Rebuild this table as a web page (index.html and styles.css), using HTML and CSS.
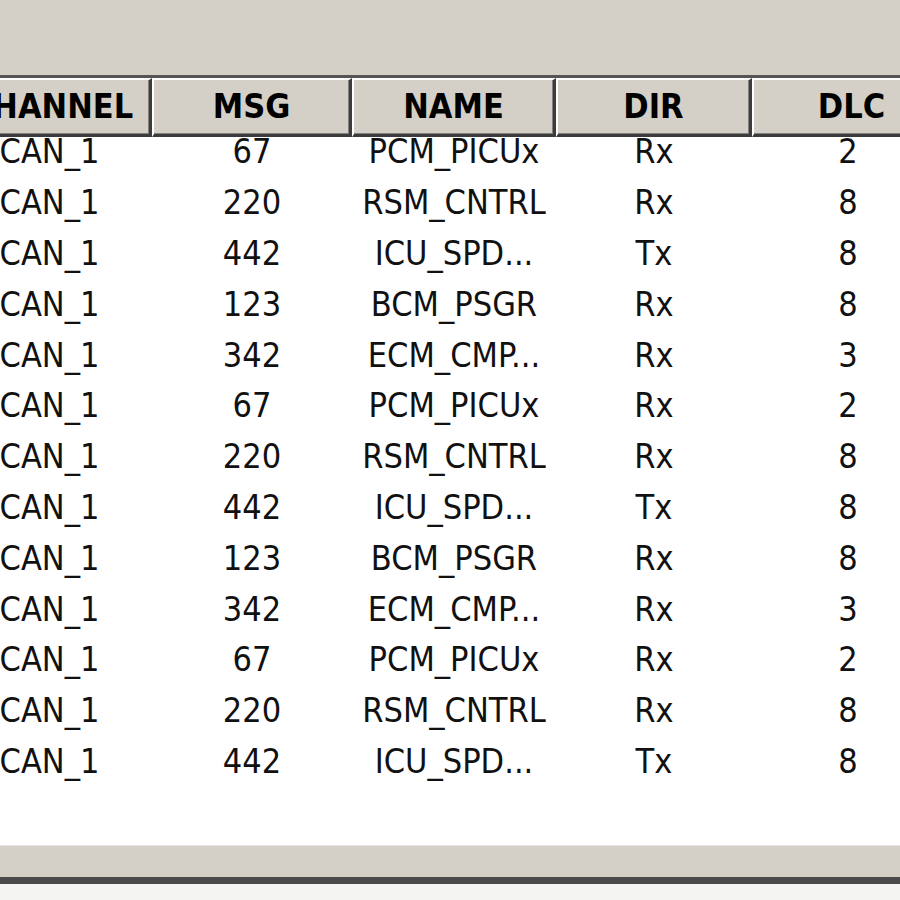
FILE: index.html
```html
<!DOCTYPE html>
<html>
<head>
<meta charset="utf-8">
<link rel="stylesheet" href="styles.css">
</head>
<body>
<div class="window">
  <div class="top"></div>
  <div class="list">
    <div class="header cols">
      <div class="hcell">CHANNEL</div>
      <div class="hcell">MSG</div>
      <div class="hcell">NAME</div>
      <div class="hcell">DIR</div>
      <div class="hcell">DLC</div>
    </div>
    <div class="body">
      <div class="rows">
        <div class="row cols"><span>CAN_1</span><span>67</span><span>PCM_PICUx</span><span>Rx</span><span>2</span></div>
        <div class="row cols"><span>CAN_1</span><span>220</span><span>RSM_CNTRL</span><span>Rx</span><span>8</span></div>
        <div class="row cols"><span>CAN_1</span><span>442</span><span>ICU_SPD...</span><span>Tx</span><span>8</span></div>
        <div class="row cols"><span>CAN_1</span><span>123</span><span>BCM_PSGR</span><span>Rx</span><span>8</span></div>
        <div class="row cols"><span>CAN_1</span><span>342</span><span>ECM_CMP...</span><span>Rx</span><span>3</span></div>
        <div class="row cols"><span>CAN_1</span><span>67</span><span>PCM_PICUx</span><span>Rx</span><span>2</span></div>
        <div class="row cols"><span>CAN_1</span><span>220</span><span>RSM_CNTRL</span><span>Rx</span><span>8</span></div>
        <div class="row cols"><span>CAN_1</span><span>442</span><span>ICU_SPD...</span><span>Tx</span><span>8</span></div>
        <div class="row cols"><span>CAN_1</span><span>123</span><span>BCM_PSGR</span><span>Rx</span><span>8</span></div>
        <div class="row cols"><span>CAN_1</span><span>342</span><span>ECM_CMP...</span><span>Rx</span><span>3</span></div>
        <div class="row cols"><span>CAN_1</span><span>67</span><span>PCM_PICUx</span><span>Rx</span><span>2</span></div>
        <div class="row cols"><span>CAN_1</span><span>220</span><span>RSM_CNTRL</span><span>Rx</span><span>8</span></div>
        <div class="row cols"><span>CAN_1</span><span>442</span><span>ICU_SPD...</span><span>Tx</span><span>8</span></div>
      </div>
    </div>
    <div class="bottom"></div>
  </div>
</div>
</body>
</html>
```
FILE: styles.css
```css
html, body {
  margin: 0;
  padding: 0;
  background: #f4f4f2;
}
.window {
  width: 900px;
  height: 900px;
  overflow: hidden;
  font-family: "DejaVu Sans Condensed", "DejaVu Sans", sans-serif;
  font-stretch: condensed;
  color: #111;
}
.top {
  height: 75px;
  background: #d4d0c8;
}
.list {
  border-top: 3px solid #555555;
  overflow: hidden;
}
.cols {
  display: grid;
  grid-template-columns: 200px 200px 204px 196px 200px;
  margin-left: -48px;
}
.header {
  height: 59px;
  position: relative;
  z-index: 1;
}
.hcell {
  box-sizing: border-box;
  background: #d4d0c8;
  border-top: 2px solid #ffffff;
  border-left: 2px solid #ffffff;
  border-right: 3px solid #3c3c3c;
  border-bottom: 3px solid #3c3c3c;
  box-shadow: inset -1px -1px 0 #808080;
  display: flex;
  align-items: center;
  justify-content: center;
  font-weight: bold;
  font-size: 34px;
  color: #000;
  padding-bottom: 2px;
}
.body {
  height: 709px;
  background: #ffffff;
  overflow: hidden;
}
.rows {
  margin-top: -11px;
}
.row {
  height: 50.8px;
  align-items: center;
  font-size: 34px;
}
.row span {
  text-align: center;
  white-space: nowrap;
}
.row span:first-child {
  padding-right: 5px;
}
.row span:last-child {
  padding-right: 8px;
}
.bottom {
  height: 31px;
  background: #d4d0c8;
  border-bottom: 7px solid #4a4a4a;
  box-shadow: 0 -1px 0 #e8e6e2;
}
```
